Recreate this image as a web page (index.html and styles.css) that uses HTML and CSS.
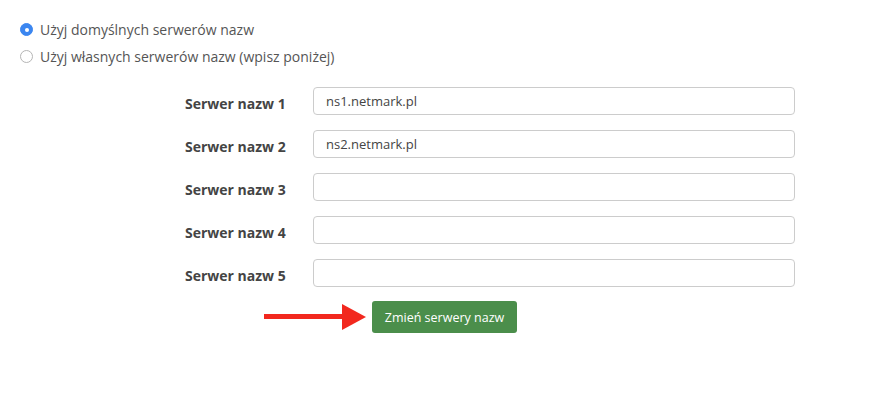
FILE: index.html
```html
<!DOCTYPE html>
<html lang="pl">
<head>
  <meta charset="UTF-8">
  <meta name="viewport" content="width=device-width, initial-scale=1.0">
  <title>Serwery nazw</title>
  <link rel="stylesheet" href="styles.css">
</head>
<body>
  <div class="options">
    <label class="option">
      <span class="radio checked"></span>
      Użyj domyślnych serwerów nazw
    </label>
    <label class="option">
      <span class="radio"></span>
      Użyj własnych serwerów nazw (wpisz poniżej)
    </label>
  </div>

  <form class="ns-form">
    <label class="ns-label">Serwer nazw 1</label>
    <input class="ns-input" type="text" value="ns1.netmark.pl">
    <label class="ns-label">Serwer nazw 2</label>
    <input class="ns-input" type="text" value="ns2.netmark.pl">
    <label class="ns-label">Serwer nazw 3</label>
    <input class="ns-input" type="text">
    <label class="ns-label">Serwer nazw 4</label>
    <input class="ns-input" type="text">
    <label class="ns-label">Serwer nazw 5</label>
    <input class="ns-input" type="text">
  </form>

  <div class="actions">
    <svg class="arrow" width="102" height="26" viewBox="0 0 102 26">
      <rect x="0" y="10" width="80" height="5" fill="#f2281e"/>
      <polygon points="78,0 102,13 78,26" fill="#f2281e"/>
    </svg>
    <button class="submit" type="button">Zmień serwery nazw</button>
  </div>
</body>
</html>
```

FILE: styles.css
```css
body {
  margin: 0;
  background: #fff;
  font-family: "Open Sans", Arial, sans-serif;
  color: #555;
}
.options {
  padding: 16px 0 0 20px;
}
.option {
  display: flex;
  align-items: center;
  height: 27px;
  font-size: 14px;
  color: #555;
}
.radio {
  width: 11px;
  height: 11px;
  border: 1px solid #b5b5b5;
  border-radius: 50%;
  margin-right: 7px;
  background: #fff;
  position: relative;
}
.radio.checked {
  background: #3b86f0;
  border-color: #3b86f0;
}
.radio.checked::after {
  content: "";
  position: absolute;
  left: 3.5px;
  top: 3.5px;
  width: 4px;
  height: 4px;
  border-radius: 50%;
  background: #fff;
}
.ns-form {
  display: grid;
  grid-template-columns: 128px 482px;
  grid-auto-rows: 28px;
  row-gap: 15px;
  margin: 17px 0 0 185px;
  align-items: center;
}
.ns-label {
  font-size: 14px;
  font-weight: 700;
  color: #444;
  padding-top: 5px;
}
.ns-input {
  box-sizing: border-box;
  height: 28px;
  width: 100%;
  border: 1px solid #ccc;
  border-radius: 4px;
  padding: 0 12px;
  font-family: "Open Sans", Arial, sans-serif;
  font-size: 13px;
  color: #444;
  margin: 0;
}
.actions {
  display: flex;
  align-items: center;
  gap: 6px;
  margin: 14px 0 0 264px;
}
.submit {
  width: 145px;
  height: 32px;
  border: none;
  border-radius: 3px;
  background: #4b8e4b;
  color: #fff;
  font-family: "Open Sans", Arial, sans-serif;
  font-size: 12.5px;
  font-weight: 500;
  padding: 0;
}
```
